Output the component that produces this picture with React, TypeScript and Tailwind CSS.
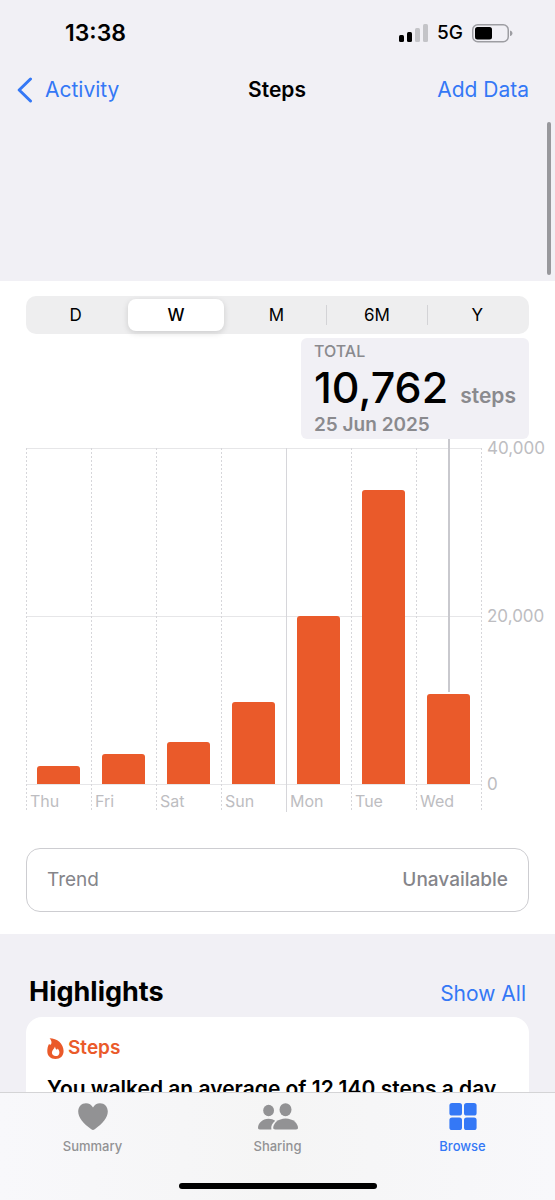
import { Fragment, useState } from "react";
import clsx from "clsx";

const RANGES = ["D", "W", "M", "6M", "Y"];

const MAX_STEPS = 40000;

const DAYS = [
  { day: "Thu", steps: 2150 },
  { day: "Fri", steps: 3600 },
  { day: "Sat", steps: 5000 },
  { day: "Sun", steps: 9750 },
  { day: "Mon", steps: 20050, weekStart: true },
  { day: "Tue", steps: 35000 },
  { day: "Wed", steps: 10762, selected: true },
];

function StatusBar() {
  return (
    <div className="flex h-[66px] items-center justify-between pl-[65px] pr-[42px]">
      <span className="text-[23px] font-semibold leading-7">13:38</span>
      <div className="flex items-center gap-[9px]">
        <svg width="29" height="18" viewBox="0 0 29 18" aria-hidden="true">
          <rect x="0" y="11" width="5" height="7" rx="1.5" fill="#000" />
          <rect x="8" y="8" width="5" height="10" rx="1.5" fill="#000" />
          <rect x="16" y="4" width="5" height="14" rx="1.5" fill="#c4c4c8" />
          <rect x="24" y="0" width="5" height="18" rx="1.5" fill="#c4c4c8" />
        </svg>
        <span className="text-[19px] font-medium leading-6">5G</span>
        <svg width="41" height="19" viewBox="0 0 41 19" aria-hidden="true">
          <rect x="0.75" y="0.75" width="35.5" height="17" rx="5" fill="none" stroke="#9d9da2" strokeWidth="1.5" />
          <rect x="3" y="3" width="17" height="12.5" rx="2.5" fill="#000" />
          <path d="M38 6.5c1.6.4 2.4 1.4 2.4 2.8s-.8 2.4-2.4 2.8z" fill="#9d9da2" />
        </svg>
      </div>
    </div>
  );
}

function NavBar() {
  return (
    <nav className="grid h-12 grid-cols-3 items-center pl-[17px] pr-[26px] text-[21px] leading-7">
      <a href="#activity" className="flex items-center gap-3 text-[#3478f6]">
        <svg width="16" height="26" viewBox="0 0 16 26" fill="none" aria-hidden="true">
          <path d="M13.5 2 2.2 13l11.3 11" stroke="currentColor" strokeWidth="3" strokeLinecap="round" strokeLinejoin="round" />
        </svg>
        Activity
      </a>
      <h1 className="pl-2 text-center font-semibold">Steps</h1>
      <button type="button" className="text-right text-[#3478f6]">
        Add Data
      </button>
    </nav>
  );
}

function RangePicker() {
  const [range, setRange] = useState("W");
  const active = RANGES.indexOf(range);

  return (
    <div className="flex h-[38px] items-center rounded-[10px] bg-[#eeeeef] pr-0.5">
      {RANGES.map((r, i) => (
        <Fragment key={r}>
          {i > 0 && (
            <span
              className={clsx(
                "h-5 w-px",
                i === active || i === active + 1 ? "bg-transparent" : "bg-[#d3d3d6]"
              )}
            />
          )}
          <button
            type="button"
            aria-pressed={r === range}
            onClick={() => setRange(r)}
            className={clsx(
              "mx-0.5 h-8 flex-1 rounded-lg text-[17px] leading-6",
              r === range
                ? "bg-white font-medium shadow-[0_2px_6px_rgba(0,0,0,0.14)]"
                : "font-normal"
            )}
          >
            {r}
          </button>
        </Fragment>
      ))}
    </div>
  );
}

function Chart() {
  return (
    <div className="-mr-[20px] mt-[9px] flex">
      <div className="relative flex flex-1">
        {/* horizontal grid lines */}
        <div className="absolute inset-x-0 top-0 h-[337px] border-y border-[#e6e6e8]">
          <div className="mt-[167px] border-t border-[#e6e6e8]" />
        </div>
        {DAYS.map((d) => (
          <div
            key={d.day}
            className={clsx(
              "relative flex-1 bg-no-repeat",
              d.weekStart
                ? "bg-[linear-gradient(#d6d6da,#d6d6da)] bg-[length:1px_100%]"
                : "bg-[repeating-linear-gradient(to_bottom,#d6d6da_0_2px,transparent_2px_4px)] bg-[length:1px_100%]"
            )}
          >
            <div className="flex h-[336px] items-end justify-center">
              <div
                className="w-[65%] rounded-t-[3px] bg-[#ea5a2a]"
                style={{ height: `${(d.steps / MAX_STEPS) * 100}%` }}
              />
            </div>
            {d.selected && (
              <div className="absolute -top-[9px] left-1/2 -ml-px h-[253px] w-0.5 bg-[#c9c9ce]" />
            )}
            <div className="h-7 pl-1 pt-[5px] text-[16px] leading-6 text-[#bdbdc1]">
              {d.day}
            </div>
          </div>
        ))}
      </div>
      <div className="w-[68px] bg-[repeating-linear-gradient(to_bottom,#d6d6da_0_2px,transparent_2px_4px)] bg-[length:1px_100%] bg-no-repeat">
        <div className="-mt-3 flex h-[360px] flex-col justify-between pl-[6px] text-[17px] leading-6 text-[#bdbdc1]">
          <span>40,000</span>
          <span>20,000</span>
          <span>0</span>
        </div>
      </div>
    </div>
  );
}

function FlameIcon() {
  return (
    <svg width="17" height="21" viewBox="0 0 17 21" aria-hidden="true">
      <path
        d="M2.6.2C10 .2 16.6 5.600 16.600 13c0 5-3.400 8-8.200 8S.3 17.900.3 13.300c0-2.600.4-5 1.700-7.300.5.6 1.200.8 1.900.6C5.200 4.600 4.400 2.200 2.600.2z"
        fill="#ea5a2a"
      />
      <path
        d="M8 8.400c.3 2 .9 2.700 1.900 3.300.4-.3.600-.7.700-1.200 1.300 1.300 1.800 2.600 1.800 3.900 0 2.200-1.500 3.700-3.700 3.700s-3.800-1.500-3.800-3.600C4.900 12 7.300 11 8 8.400z"
        fill="#fff"
      />
    </svg>
  );
}

function TabBar() {
  return (
    <footer className="relative h-[108px] shrink-0 border-t border-[#d4d4d6] bg-linear-to-r from-[#f8f8fb] via-[#f5f5f5] to-[#f8f8fb]">
      <div className="grid grid-cols-3 pt-[10px] text-[13px] font-medium leading-5 text-[#929294]">
        <a href="#summary" className="flex flex-col items-center gap-[6px]">
          <svg width="30" height="27" viewBox="0 0 30 27" fill="currentColor" aria-hidden="true">
            <path d="M15 27c-.5 0-1.100-.4-1.700-.8C5.300 20.800.2 14.800.2 8.600.2 3.700 3.600.2 8 .2c3 0 5.500 1.600 7 4.200C16.500 1.800 19 .2 22 .2c4.400 0 7.800 3.500 7.800 8.400 0 6.200-5.100 12.200-13.100 17.600-.6.4-1.200.8-1.700.8z" />
          </svg>
          Summary
        </a>
        <a href="#sharing" className="flex flex-col items-center gap-[6px]">
          <svg width="40" height="27" viewBox="0 0 40 27" fill="currentColor" aria-hidden="true">
            <ellipse cx="10.600" cy="7.500" rx="5.400" ry="5.800" />
            <path d="M1.800 26.500C.6 26.500 0 25.900 0 24.800c0-4.300 4.300-9 10.500-9 2.700 0 5 .8 6.700 1.900-3 2.300-4.500 5.500-3.800 8.800z" />
            <ellipse cx="27.500" cy="6.700" rx="6" ry="6.500" />
            <path d="M17.200 26.500c-1.400 0-2-.6-2-1.700 0-4.200 4.700-9.400 12.400-9.400S40 20.600 40 24.800c0 1.100-.6 1.700-2 1.700z" />
          </svg>
          Sharing
        </a>
        <a href="#browse" className="flex flex-col items-center gap-[6px] text-[#3478f6]">
          <svg width="28" height="27" viewBox="0 0 28 27" fill="currentColor" aria-hidden="true">
            <rect x="0.400" y="0" width="12.600" height="12.500" rx="2.600" />
            <rect x="15" y="0" width="12.600" height="12.500" rx="2.600" />
            <rect x="0.400" y="14.500" width="12.600" height="12.500" rx="2.600" />
            <rect x="15" y="14.500" width="12.600" height="12.500" rx="2.600" />
          </svg>
          Browse
        </a>
      </div>
      {/* home indicator */}
      <div className="mx-auto mt-[27px] h-[6px] w-[198px] rounded-full bg-black" />
    </footer>
  );
}

export default function App() {
  return (
    <div className="relative flex h-screen flex-col overflow-hidden bg-[#f1f0f5] font-['Inter',sans-serif] text-black">
      <header className="shrink-0">
        <StatusBar />
        <NavBar />
      </header>
      <div className="absolute right-1 top-[122px] h-[153px] w-1 rounded-full bg-[#98989c]" />

      <main className="min-h-0 flex-1 overflow-hidden pt-[167px]">
        <section className="bg-white px-[26px] pb-[22px] pt-[15px]">
          <RangePicker />
          <div className="mt-1 flex justify-end">
            <div className="rounded-md bg-[#f1f0f5] px-[13px] text-[#8a8a8e]">
              <p className="pt-px text-[16px] font-medium leading-6">TOTAL</p>
              <p className="flex h-[50px] items-baseline gap-3 leading-[48px]">
                <span className="text-[43px] font-medium text-black">10,762</span>
                <span className="text-[21px] font-semibold">steps</span>
              </p>
              <p className="pb-0.5 text-[19px] font-semibold leading-6">25 Jun 2025</p>
            </div>
          </div>
          <Chart />
          <div className="mt-9 flex h-16 items-center justify-between rounded-[14px] border border-[#cdcdd1] px-5 text-[19px] leading-6 text-[#85858a]">
            <span>Trend</span>
            <span className="font-medium">Unavailable</span>
          </div>
        </section>

        <section className="px-[26px] pt-[42px]">
          <div className="flex items-baseline justify-between px-[3px]">
            <h2 className="text-[27px] font-bold leading-8">Highlights</h2>
            <a href="#highlights" className="text-[21px] leading-7 text-[#3478f6]">
              Show All
            </a>
          </div>
          <article className="mt-[9px] rounded-2xl bg-white px-[21px] pb-6 pt-[19px]">
            <div className="flex items-center gap-1">
              <FlameIcon />
              <h3 className="text-[19px] font-semibold leading-6 text-[#ea5a2a]">Steps</h3>
            </div>
            <p className="whitespace-nowrap pt-[17px] text-[21px] font-semibold leading-6">
              You walked an average of 12,140 steps a day
            </p>
          </article>
        </section>
      </main>

      <TabBar />
    </div>
  );
}
